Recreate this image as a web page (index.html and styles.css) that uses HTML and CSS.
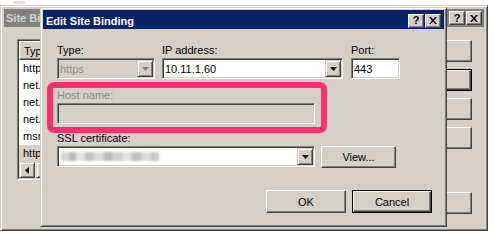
FILE: index.html
```html
<!doctype html>
<html lang="en">
  <head>
    <meta charset="UTF-8" />
    <meta name="viewport" content="width=device-width, initial-scale=1.0" />
    <title>Edit Site Binding</title>
    <link rel="stylesheet" href="styles.css">
  </head>
  <body>
    <div class="top-strip"><span class="smudge"></span></div>

    <!-- Site Bindings window, behind -->
    <div class="window back">
      <div class="titlebar inactive">
        <span class="title">Site Bindings</span>
        <div class="caption-buttons">
          <span class="caption-btn">?</span>
          <span class="caption-btn">
            <svg width="8" height="7" viewBox="0 0 8 7"><path d="M0 0h2l2 2.4L6 0h2L5 3.5 8 7H6L4 4.6 2 7H0l3-3.5z" fill="#000"/></svg>
          </span>
        </div>
      </div>

      <div class="back-body">
        <div class="listview">
          <div class="list-header">
            <span class="list-col">Type</span>
            <span class="list-col filler"></span>
          </div>
          <ul class="list-rows">
            <li>http</li>
            <li>net.tcp</li>
            <li>net.pipe</li>
            <li>net.msmq</li>
            <li>msmq.formatname</li>
            <li class="selected">https</li>
          </ul>
          <div class="hscroll">
            <span class="scroll-btn">
              <svg width="4" height="7" viewBox="0 0 4 7"><path d="M4 0v7L0 3.5z" fill="#000"/></svg>
            </span>
            <span class="scroll-thumb"></span>
          </div>
        </div>

        <div class="side-buttons">
          <button class="btn" type="button">Add...</button>
          <button class="btn default" type="button">Edit...</button>
          <button class="btn" type="button">Remove</button>
          <button class="btn" type="button">Browse</button>
          <button class="btn push-down" type="button">Close</button>
        </div>
      </div>
    </div>

    <!-- Edit Site Binding dialog, in front -->
    <div class="window front">
      <div class="titlebar">
        <span class="title">Edit Site Binding</span>
        <div class="caption-buttons">
          <span class="caption-btn">?</span>
          <span class="caption-btn">
            <svg width="8" height="7" viewBox="0 0 8 7"><path d="M0 0h2l2 2.4L6 0h2L5 3.5 8 7H6L4 4.6 2 7H0l3-3.5z" fill="#000"/></svg>
          </span>
        </div>
      </div>

      <div class="dialog-body">
        <div class="row-top">
          <div class="field">
            <label>Type:</label>
            <div class="combo disabled">
              <span class="combo-value">https</span>
              <span class="combo-arrow">
                <svg width="7" height="4" viewBox="0 0 7 4"><path d="M0 0h7L3.5 4z" fill="#808080"/></svg>
              </span>
            </div>
          </div>

          <div class="field">
            <label>IP address:</label>
            <div class="combo">
              <span class="combo-value">10.11.1.60</span>
              <span class="combo-arrow">
                <svg width="7" height="4" viewBox="0 0 7 4"><path d="M0 0h7L3.5 4z" fill="#000"/></svg>
              </span>
            </div>
          </div>

          <div class="field port">
            <label>Port:</label>
            <div class="textbox">443</div>
          </div>
        </div>

        <div class="field row-host">
          <label class="muted">Host name:</label>
          <div class="textbox wide disabled"></div>
        </div>

        <div class="row-cert">
          <label class="cert-label">SSL certificate:</label>
          <div class="combo wide">
            <span class="combo-value"><span class="blurred"></span></span>
            <span class="combo-arrow">
              <svg width="7" height="4" viewBox="0 0 7 4"><path d="M0 0h7L3.5 4z" fill="#000"/></svg>
            </span>
          </div>
          <button class="btn view-btn" type="button">View...</button>
        </div>

        <div class="dialog-footer">
          <button class="btn wide-btn" type="button">OK</button>
          <button class="btn wide-btn default" type="button">Cancel</button>
        </div>
      </div>
    </div>

    <div class="annotation"></div>
  </body>
</html>
```

FILE: styles.css
```css
:root {
  --face: #d4d0c8;
  --shadow: #808080;
  --dark: #404040;
  --title: #0a246a;
}

* {
  box-sizing: border-box;
}

body {
  position: relative;
  width: 494px;
  height: 234px;
  margin: 0;
  overflow: hidden;
  background: #fff;
  color: #000;
  font: 11px "Liberation Sans", Arial, sans-serif;
}

.top-strip {
  display: flex;
  height: 5px;
}

.smudge {
  width: 12px;
  height: 3px;
  margin: 1px 0 0 13px;
  border-radius: 1px;
  background: #eddada;
}

/* Windows */
.window {
  display: flex;
  flex-direction: column;
  padding: 2px;
  border: 1px solid;
  border-color: var(--face) var(--dark) var(--dark) var(--face);
  background: var(--face);
  box-shadow: inset 1px 1px #fff, inset -1px -1px var(--shadow);
}

.back {
  width: 488px;
  height: 226px;
  padding: 3px;
}

.front {
  position: absolute;
  top: 7px;
  left: 40px;
  width: 407px;
  height: 220px;
}

.titlebar {
  display: flex;
  align-items: center;
  justify-content: space-between;
  height: 18px;
  padding: 0 2px;
  background: var(--title);
  color: #fff;
  font-weight: bold;
}

.titlebar.inactive {
  background: var(--shadow);
  color: var(--face);
}

.front .titlebar {
  height: 19px;
  padding: 2px 3px 0 3px;
}

.title {
  white-space: nowrap;
}

.caption-buttons {
  display: flex;
  gap: 1px;
}

.caption-btn {
  display: flex;
  align-items: center;
  justify-content: center;
  width: 16px;
  height: 14px;
  border: 1px solid;
  border-color: #fff var(--dark) var(--dark) #fff;
  background: var(--face);
  box-shadow: inset -1px -1px var(--shadow);
  color: #000;
  font-size: 11px;
  font-weight: bold;
  line-height: 1;
}

/* Raised buttons */
.btn {
  height: 22px;
  padding: 0;
  border: 1px solid;
  border-color: #fff var(--dark) var(--dark) #fff;
  background: var(--face);
  box-shadow: inset -1px -1px var(--shadow);
  color: #000;
  font: inherit;
  text-align: center;
}

.btn.default {
  border-color: #000;
  box-shadow: inset 1px 1px #fff, inset -1px -1px var(--dark), inset -2px -2px var(--shadow);
}

/* Behind window content */
.back-body {
  display: flex;
  flex: 1;
  justify-content: space-between;
  padding: 12px 12px 13px 13px;
}

.listview {
  display: flex;
  flex-direction: column;
  width: 340px;
  height: 141px;
  padding: 1px;
  border: 1px solid;
  border-color: var(--shadow) #fff #fff var(--shadow);
  background: #fff;
  box-shadow: inset 1px 1px var(--dark), inset -1px -1px var(--face);
}

.list-header {
  display: flex;
  height: 19px;
}

.list-col {
  display: flex;
  align-items: center;
  width: 90px;
  padding-left: 4px;
  border: 1px solid;
  border-color: #fff var(--dark) var(--dark) #fff;
  background: var(--face);
  box-shadow: inset -1px -1px var(--shadow);

  &.filler {
    flex: 1;
  }
}

.list-rows {
  flex: 1;
  margin: 0;
  padding: 0;
  list-style: none;

  li {
    height: 17px;
    padding-left: 4px;
    line-height: 17px;
    white-space: nowrap;
  }

  .selected {
    background: var(--face);
  }
}

.hscroll {
  display: flex;
  height: 16px;
  background: #eeece8;
}

.scroll-btn,
.scroll-thumb {
  display: flex;
  align-items: center;
  justify-content: center;
  border: 1px solid;
  border-color: var(--face) var(--dark) var(--dark) var(--face);
  background: var(--face);
  box-shadow: inset 1px 1px #fff, inset -1px -1px var(--shadow);
}

.scroll-btn {
  width: 16px;
}

.scroll-thumb {
  width: 60px;
  margin-left: 1px;
}

.side-buttons {
  display: flex;
  flex-direction: column;
  width: 100px;
  margin-top: 1px;
  gap: 7px;
}

.push-down {
  margin-top: auto;
}

/* Dialog content */
.dialog-body {
  display: flex;
  flex: 1;
  flex-direction: column;
  padding: 15px 12px 11px 14px;
}

label {
  display: block;
  line-height: 13px;
  white-space: nowrap;
}

.muted {
  color: #8c8c8c;
}

.field {
  display: flex;
  flex-direction: column;
  gap: 1px;
}

.row-top {
  display: grid;
  grid-template-columns: 98px 181px 50px;
  column-gap: 7px;
}

.port {
  padding-left: 1px;
}

.row-host {
  margin-top: 10px;
}

.row-cert {
  display: grid;
  grid-template-columns: 258px 75px;
  margin-top: 8px;
  gap: 1px 6px;

  .cert-label {
    grid-column: 1 / -1;
  }
}

.combo,
.textbox {
  display: flex;
  align-items: center;
  height: 21px;
  padding-left: 2px;
  border: 1px solid;
  border-color: var(--shadow) #fff #fff var(--shadow);
  background: #fff;
  box-shadow: inset 1px 1px var(--dark), inset -1px -1px var(--face);
}

.wide {
  width: 258px;
}

.disabled {
  background: var(--face);
  color: #8c8c8c;
}

.combo-value {
  display: flex;
  flex: 1;
  align-items: center;
  white-space: nowrap;
}

.combo-arrow {
  display: flex;
  align-items: center;
  justify-content: center;
  width: 16px;
  height: 17px;
  margin-right: 1px;
  border: 1px solid;
  border-color: var(--face) var(--dark) var(--dark) var(--face);
  background: var(--face);
  box-shadow: inset 1px 1px #fff, inset -1px -1px var(--shadow);
}

.blurred {
  width: 98px;
  height: 9px;
  margin-left: 1px;
  background: linear-gradient(90deg, #d6d6d6 0 8%, #bdbdbd 8% 15%, #e2e2e2 15% 24%, #c4c4c4 24% 33%, #dadada 33% 44%, #b9b9b9 44% 52%, #d0d0d0 52% 63%, #e4e4e4 63% 71%, #c2c2c2 71% 82%, #dcdcdc 82% 91%, #cbcbcb 91%);
  filter: blur(1px);
}

.view-btn {
  height: 22px;
}

.dialog-footer {
  display: flex;
  justify-content: flex-end;
  margin-top: auto;
  gap: 6px;
}

.wide-btn {
  width: 80px;
  height: 23px;
}

/* Pink highlight drawn over the screenshot */
.annotation {
  position: absolute;
  top: 82px;
  left: 47px;
  width: 280px;
  height: 51px;
  border: 6px solid #fe2f6e;
  border-radius: 7px;
}
```
